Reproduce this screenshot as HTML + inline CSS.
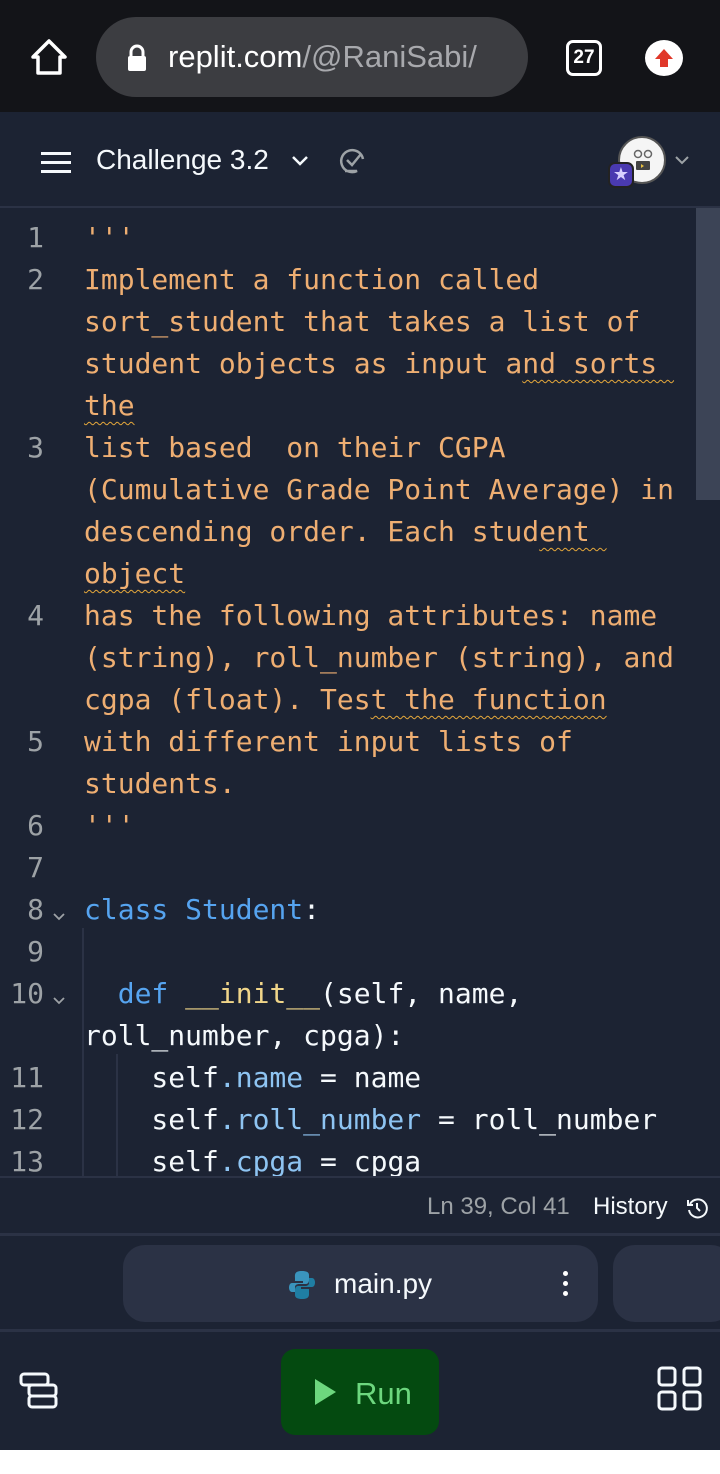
<!DOCTYPE html>
<html><head><meta charset="utf-8"><style>
*{margin:0;padding:0;box-sizing:border-box}
body{width:720px;height:1474px;background:#fff;font-family:"Liberation Sans",sans-serif;position:relative;overflow:hidden}
.abs{position:absolute}
#top{left:0;top:0;width:720px;height:112px;background:#131418}
#url{left:96px;top:17px;width:432px;height:80px;border-radius:40px;background:#3c3d41;color:#fff;font-size:31px;line-height:80px;padding-left:72px}
#hdr{left:0;top:112px;width:720px;height:96px;background:#1c2333;border-bottom:2px solid #2b3245}
#ed{left:0;top:208px;width:720px;height:968px;background:#1c2333;overflow:hidden;font-family:"DejaVu Sans Mono",monospace;font-size:28px}
.ln{position:absolute;left:0;width:44px;text-align:right;color:#9da2a6}
.cd{position:absolute;left:84px;white-space:pre;color:#eeae72}
.sq{text-decoration:underline wavy #e5a83b;text-decoration-thickness:1px;text-underline-offset:6px}
.b{color:#56a4f0}.w{color:#f5f9fc}.y{color:#f0d589}.lb{color:#8ec4f2}
#st{left:0;top:1176px;width:720px;height:60px;background:#1c2333;border-top:2px solid #2b3245;border-bottom:3px solid #2b3245}
#tb{left:0;top:1236px;width:720px;height:96px;background:#1c2333;border-bottom:3px solid #2b3245}
#bt{left:0;top:1332px;width:720px;height:118px;background:#1c2333}
#ed .ln,#ed .cd{margin-top:5px}
</style></head><body>
<div id="top" class="abs">
<svg class="abs" style="left:30px;top:38px" width="38" height="38" viewBox="0 0 38 38"><path d="M19 3 L35 19 L30 19 L30 35 L8 35 L8 19 L3 19 Z" fill="none" stroke="#fff" stroke-width="3.5" stroke-linejoin="round"/></svg>
<div id="url" class="abs">replit.com<span style="color:#a8a9ad">/@RaniSabi/</span></div>
<svg class="abs" style="left:126px;top:44px" width="22" height="28" viewBox="0 0 22 28"><path d="M5 12 V8 a6 6 0 0 1 12 0 V12" fill="none" stroke="#fff" stroke-width="3"/><rect x="2" y="12" width="18" height="15" rx="2" fill="#fff"/></svg>
<div class="abs" style="left:566px;top:40px;width:36px;height:36px;border:3.5px solid #fff;border-radius:7px;color:#fff;font-size:19px;font-weight:bold;text-align:center;line-height:29px">27</div>
<div class="abs" style="left:645px;top:40px;width:38px;height:36px;border-radius:50%;background:#fff"></div>
<svg class="abs" style="left:652px;top:46px" width="24" height="24" viewBox="0 0 24 24"><path d="M12 3 L21 13 H16 V21 H8 V13 H3 Z" fill="#e0382a"/></svg>
</div>
<div id="hdr" class="abs">
<div class="abs" style="left:41px;top:40px;width:30px;height:3px;background:#f5f9fc;box-shadow:0 9px 0 #f5f9fc,0 18px 0 #f5f9fc"></div>
<div class="abs" style="left:96px;top:32px;color:#f5f9fc;font-size:28px">Challenge 3.2</div>
<svg class="abs" style="left:290px;top:42px" width="20" height="14" viewBox="0 0 20 14"><path d="M3 3 L10 10 L17 3" fill="none" stroke="#f5f9fc" stroke-width="2.5"/></svg>
<svg class="abs" style="left:337px;top:35px" width="32" height="28" viewBox="0 0 32 28"><path d="M26 12 A11 11 0 1 0 20 24 H8" fill="none" stroke="#9da2a6" stroke-width="2.5"/><path d="M10 13 L15 18 L24 7" fill="none" stroke="#9da2a6" stroke-width="2.5"/></svg>
<div class="abs" style="left:618px;top:24px;width:48px;height:48px;border-radius:50%;background:#f5f5f5;border:2px solid #555"></div>
<svg class="abs" style="left:628px;top:36px" width="30" height="26" viewBox="0 0 30 26"><circle cx="10" cy="6" r="3.5" fill="none" stroke="#666" stroke-width="1.5"/><circle cx="20" cy="6" r="3.5" fill="none" stroke="#666" stroke-width="1.5"/><rect x="8" y="13" width="14" height="9" rx="1" fill="#444"/><path d="M13 16 l3 2 -3 2z" fill="#e8c040"/></svg>
<div class="abs" style="left:608px;top:50px;width:26px;height:26px;border-radius:7px;background:#4a3ab0;border:2px solid #222;color:#d8d0ff;font-size:18px;text-align:center;line-height:21px">★</div>
<svg class="abs" style="left:674px;top:42px" width="16" height="12" viewBox="0 0 16 12"><path d="M2 3 L8 9 L14 3" fill="none" stroke="#9da2a6" stroke-width="2"/></svg>
</div>
<div id="ed" class="abs">
<div class="abs" style="left:696px;top:0;width:24px;height:292px;background:#3c4456"></div>
<div class="abs" style="left:82px;top:720px;width:2px;height:248px;background:#2b3245"></div>
<div class="abs" style="left:116px;top:846px;width:2px;height:122px;background:#2b3245"></div>
<div class="ln" style="top:8px">1</div><div class="cd" style="top:8px">'''</div>
<div class="ln" style="top:50px">2</div><div class="cd" style="top:50px">Implement a function called</div>
<div class="cd" style="top:92px">sort_student that takes a list of</div>
<div class="cd" style="top:134px">student objects as input a<span class="sq">nd sorts </span></div>
<div class="cd" style="top:176px"><span class="sq">the</span></div>
<div class="ln" style="top:218px">3</div><div class="cd" style="top:218px">list based  on their CGPA</div>
<div class="cd" style="top:260px">(Cumulative Grade Point Average) in</div>
<div class="cd" style="top:302px">descending order. Each stud<span class="sq">ent </span></div>
<div class="cd" style="top:344px"><span class="sq">object</span></div>
<div class="ln" style="top:386px">4</div><div class="cd" style="top:386px">has the following attributes: name</div>
<div class="cd" style="top:428px">(string), roll_number (string), and</div>
<div class="cd" style="top:470px">cgpa (float). Tes<span class="sq">t the function</span></div>
<div class="ln" style="top:512px">5</div><div class="cd" style="top:512px">with different input lists of</div>
<div class="cd" style="top:554px">students.</div>
<div class="ln" style="top:596px">6</div><div class="cd" style="top:596px">'''</div>
<div class="ln" style="top:638px">7</div>
<div class="ln" style="top:680px">8</div><div class="cd b" style="top:680px">class Student<span class="w">:</span></div>
<div class="ln" style="top:722px">9</div>
<div class="ln" style="top:764px">10</div><div class="cd w" style="top:764px">  <span class="b">def</span> <span class="y">__init__</span>(self, name,</div>
<div class="cd w" style="top:806px">roll_number, cpga):</div>
<div class="ln" style="top:848px">11</div><div class="cd w" style="top:848px">    self<span class="lb">.name</span> = name</div>
<div class="ln" style="top:890px">12</div><div class="cd w" style="top:890px">    self<span class="lb">.roll_number</span> = roll_number</div>
<div class="ln" style="top:932px">13</div><div class="cd w" style="top:932px">    self<span class="lb">.cpga</span> = cpga</div>
<svg class="abs" style="left:52px;top:704px" width="14" height="10" viewBox="0 0 14 10"><path d="M2 2 L7 7 L12 2" fill="none" stroke="#9da2a6" stroke-width="1.8"/></svg>
<svg class="abs" style="left:52px;top:788px" width="14" height="10" viewBox="0 0 14 10"><path d="M2 2 L7 7 L12 2" fill="none" stroke="#9da2a6" stroke-width="1.8"/></svg>
</div>
<div id="st" class="abs">
<div class="abs" style="left:427px;top:15px;color:#9da2a6;font-size:24px">Ln 39, Col 41</div>
<div class="abs" style="left:593px;top:15px;color:#f5f9fc;font-size:24px">History</div>
<svg class="abs" style="left:685px;top:18px" width="24" height="24" viewBox="0 0 24 24"><path d="M5 8 A9 9 0 1 1 4 14" fill="none" stroke="#f5f9fc" stroke-width="2"/><path d="M3 4 V9 H8" fill="none" stroke="#f5f9fc" stroke-width="2"/><path d="M12 7 V12 L15 15" fill="none" stroke="#f5f9fc" stroke-width="2"/></svg>
</div>
<div id="tb" class="abs">
<div class="abs" style="left:123px;top:9px;width:475px;height:77px;border-radius:22px;background:#2b3245"></div>
<div class="abs" style="left:613px;top:9px;width:120px;height:77px;border-radius:22px;background:#2b3245"></div>
<svg class="abs" style="left:288px;top:34px" width="28" height="30" viewBox="0 0 28 30"><path d="M14 1 C6 1 7 5 7 8 V11 H15 V13 H4 C0 13 0 22 4 22 H7 V17 C7 15 9 14 11 14 H18 C20 14 21 12 21 10 V5 C21 2 18 1 14 1Z" fill="#3a94bd"/><path d="M14 29 C22 29 21 25 21 22 V19 H13 V17 H24 C28 17 28 8 24 8 H21 V13 C21 15 19 16 17 16 H10 C8 16 7 18 7 20 V25 C7 28 10 29 14 29Z" fill="#1f7ea3"/></svg>
<div class="abs" style="left:334px;top:32px;color:#f5f9fc;font-size:28px">main.py</div>
<div class="abs" style="left:563px;top:35px;width:5px;height:5px;border-radius:50%;background:#fff;box-shadow:0 10px 0 #fff,0 20px 0 #fff"></div>
</div>
<div id="bt" class="abs">
<svg class="abs" style="left:14px;top:34px" width="48" height="48" viewBox="0 0 48 48"><rect x="7" y="8" width="27" height="11" rx="3" fill="none" stroke="#f5f9fc" stroke-width="3"/><rect x="15" y="19" width="27" height="11" rx="3" fill="none" stroke="#f5f9fc" stroke-width="3"/><rect x="15" y="30" width="27" height="11" rx="3" fill="none" stroke="#f5f9fc" stroke-width="3"/></svg>
<div class="abs" style="left:281px;top:17px;width:158px;height:86px;border-radius:14px;background:#044a10"></div>
<svg class="abs" style="left:312px;top:45px" width="26" height="30" viewBox="0 0 26 30"><path d="M3 2 L24 15 L3 28 Z" fill="#6dd77e"/></svg>
<div class="abs" style="left:355px;top:44px;color:#6dd77e;font-size:31px">Run</div>
<svg class="abs" style="left:656px;top:32px" width="48" height="50" viewBox="0 0 48 50"><g fill="none" stroke="#f5f9fc" stroke-width="3"><rect x="3" y="4" width="16" height="17" rx="3"/><rect x="28" y="4" width="16" height="17" rx="3"/><rect x="3" y="28" width="16" height="17" rx="3"/><rect x="28" y="28" width="16" height="17" rx="3"/></g></svg>
</div>
</body></html>
